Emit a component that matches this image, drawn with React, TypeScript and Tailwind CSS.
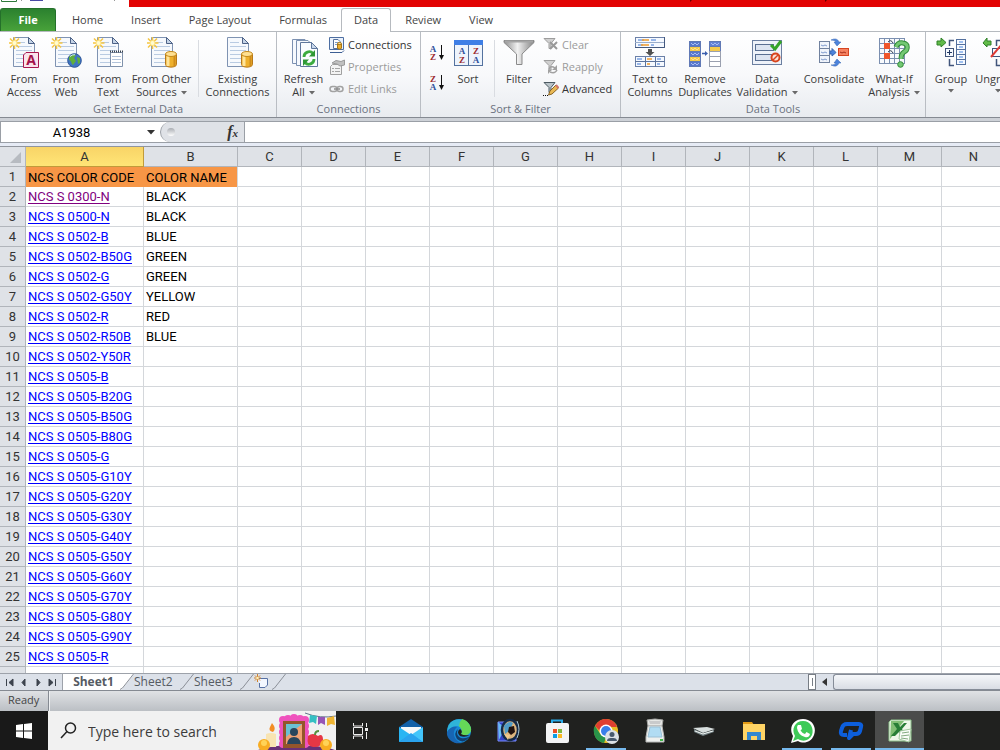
import type { ReactNode } from "react";

const uiFont = "font-['Open_Sans','Noto_Sans',sans-serif]";
const cellFont = "font-['Roboto','Lato',sans-serif]";

const tabs = ["Home", "Insert", "Page Layout", "Formulas", "Data", "Review", "View"];

const rows = [
  ["NCS S 0300-N", "BLACK"],
  ["NCS S 0500-N", "BLACK"],
  ["NCS S 0502-B", "BLUE"],
  ["NCS S 0502-B50G", "GREEN"],
  ["NCS S 0502-G", "GREEN"],
  ["NCS S 0502-G50Y", "YELLOW"],
  ["NCS S 0502-R", "RED"],
  ["NCS S 0502-R50B", "BLUE"],
  ["NCS S 0502-Y50R", ""],
  ["NCS S 0505-B", ""],
  ["NCS S 0505-B20G", ""],
  ["NCS S 0505-B50G", ""],
  ["NCS S 0505-B80G", ""],
  ["NCS S 0505-G", ""],
  ["NCS S 0505-G10Y", ""],
  ["NCS S 0505-G20Y", ""],
  ["NCS S 0505-G30Y", ""],
  ["NCS S 0505-G40Y", ""],
  ["NCS S 0505-G50Y", ""],
  ["NCS S 0505-G60Y", ""],
  ["NCS S 0505-G70Y", ""],
  ["NCS S 0505-G80Y", ""],
  ["NCS S 0505-G90Y", ""],
  ["NCS S 0505-R", ""],
];

const emptyColumns = ["C", "D", "E", "F", "G", "H", "I", "J", "K", "L", "M", "N"];

function Icon({ size = 32, children }: { size?: number; children: ReactNode }) {
  return (
    <svg width={size} height={size} viewBox={`0 0 ${size} ${size}`} className="shrink-0" aria-hidden="true">
      {children}
    </svg>
  );
}

/* ---------- Ribbon icons ---------- */

function Page() {
  return (
    <>
      <path d="M5.5 .5H20.5L26.5 6.5V29.5H5.5Z" fill="#f6f9fd" stroke="#7f93b2" />
      <path d="M20.5 .5V6.5H26.5Z" fill="#c4d3e6" stroke="#4d6287" />
      <path d="M8 9.5H24M8 13.5H24M8 17.5H24M8 21.5H24M8 25.5H24M8 5.5H17" stroke="#b9cbe2" />
    </>
  );
}

function Spark() {
  return (
    <>
      <path d="M6.5 0V12M1 6H12.5M2 1.5L11 10.5M11 1.5L2 10.5" stroke="#f5c542" strokeWidth="1.5" />
      <circle cx="6.5" cy="6" r="2.5" fill="#fffbd0" stroke="#ffe27a" />
    </>
  );
}

function Cylinder() {
  return (
    <>
      <path d="M19.5 17.5V27.5C19.5 31 30.5 31 30.5 27.5V17.5Z" fill="#eeb02c" stroke="#b8791a" />
      <path d="M22 19V29" stroke="#ffe49a" strokeWidth="3" />
      <path d="M28.5 19V29" stroke="#cf8c1c" strokeWidth="2" />
      <ellipse cx="25" cy="17" rx="5.5" ry="2.5" fill="#ffe092" stroke="#c58a1c" />
    </>
  );
}

function AccessIcon() {
  return (
    <Icon>
      <Page />
      <Spark />
      <path d="M18 15.5H30.5V30.5H15.5V18Z" fill="#fae3ec" stroke="#a8174f" />
      <text x="23" y="28" textAnchor="middle" fontSize="14" fontWeight="700" fill="#a3134b" fontFamily="Open Sans">A</text>
    </Icon>
  );
}

function WebIcon() {
  return (
    <Icon>
      <Page />
      <Spark />
      <circle cx="24.5" cy="23.5" r="6.8" fill="#3f74c4" stroke="#2c5597" />
      <path d="M19 20C21 17 24 17 26 18L24 21L26 24L23 28C21 27 22 24 19 23ZM27 20L30 21L30 26L28 27Z" fill="#5faf3c" />
      <path d="M20 19.5Q22 17.5 25 17.7" stroke="#cfe6ff" fill="none" />
    </Icon>
  );
}

function TextIcon() {
  return (
    <Icon>
      <Page />
      <Spark />
      <path d="M18.5 15.5H30.5V29.5H18.5Z" fill="#fff" stroke="#7f91ab" />
      <path d="M20 19.5H29M20 22.5H29M20 25.5H29" stroke="#b2c3da" />
      <path d="M18 14.5H31" stroke="#39414d" strokeWidth="2" strokeDasharray="1 1" />
    </Icon>
  );
}

function SourcesIcon({ spark = true }: { spark?: boolean }) {
  return (
    <Icon>
      <Page />
      {spark && <Spark />}
      <Cylinder />
    </Icon>
  );
}

function RefreshIcon() {
  return (
    <Icon>
      <path d="M4.5 2.5H17L20.5 6V26.5H4.5Z" fill="#f6f9fd" stroke="#7c91b1" />
      <path d="M8.5 3.5H20L24 7.5V28.5H8.5Z" fill="#f6f9fd" stroke="#7c91b1" />
      <path d="M12.5 5.5H23.5L29.5 11.5V29.5H12.5Z" fill="#fafcff" stroke="#5f779c" />
      <path d="M23.5 5.5V11.5H29.5Z" fill="#c9d8ec" stroke="#5f779c" />
      <path d="M16 20C16 15 22 13 25 16.5M26 22C26 27 20 29 17 25.5" fill="none" stroke="#3cab3f" strokeWidth="2.8" />
      <path d="M27 13V19.5H21ZM15 29V22.5H21Z" fill="#2f9735" />
    </Icon>
  );
}

function ConnectionsIcon() {
  return (
    <Icon size={16}>
      <path d="M.5 .5H14.5V12.5H.5Z" fill="#eaf1fb" stroke="#4d6ea2" />
      <path d="M4.5 2.5H9L11 4.5V11.5H4.5Z" fill="#fff" stroke="#56719c" />
      <path d="M6 5.5H9M6 7.5H8" stroke="#7e9bc4" />
      <path d="M8.5 7V11C8.5 12.5 12.5 12.5 12.5 11V7Z" fill="#eeb02c" stroke="#a77516" />
      <ellipse cx="10.5" cy="6.5" rx="2" ry="1" fill="#ffe092" stroke="#a77516" />
      <path d="M1 15.5H13L15 13.5" fill="none" stroke="#3c5f94" />
    </Icon>
  );
}

function PropertiesIcon() {
  return (
    <Icon size={16}>
      <path d="M3.5 5.5H12.5V15.5H1.5V7.5Z" fill="#f3f3f3" stroke="#a0a0a0" />
      <path d="M3 9.5H5M6 9.5H11M3 12.5H5M6 12.5H11" stroke="#a5a5a5" />
      <path d="M3 4L7 1.5L12 2.5L15.5 1V6L11 7L8 5Z" fill="#c0c0c0" stroke="#9a9a9a" />
    </Icon>
  );
}

function LinksIcon() {
  return (
    <Icon size={16}>
      <rect x="1" y="5.5" width="7" height="5" rx="2.5" fill="none" stroke="#a2a2a2" strokeWidth="1.5" />
      <rect x="8" y="5.5" width="6" height="5" rx="2.5" fill="none" stroke="#a2a2a2" strokeWidth="1.5" />
      <path d="M5 8H11" stroke="#8d8d8d" strokeWidth="1.5" />
    </Icon>
  );
}

function Letter({ x, y, char }: { x: number; y: number; char: "A" | "Z" }) {
  return (
    <text
      x={x}
      y={y}
      textAnchor="middle"
      fontSize="9"
      fontWeight="700"
      fontFamily="Liberation Serif"
      fill={char === "A" ? "#2f4f9b" : "#9c2a2e"}
    >
      {char}
    </text>
  );
}

function SortSmallIcon({ reverse = false }: { reverse?: boolean }) {
  return (
    <Icon size={18}>
      <Letter x={5} y={8} char={reverse ? "Z" : "A"} />
      <Letter x={5} y={16} char={reverse ? "A" : "Z"} />
      <path d="M13.5 1V14" stroke="#111" />
      <path d="M11 11H16L13.5 16Z" fill="#111" />
    </Icon>
  );
}

function SortIcon() {
  return (
    <Icon>
      <rect x="2.5" y="3.5" width="28" height="25" fill="#eef4fc" stroke="#54729f" />
      <rect x="2" y="3" width="29" height="5" fill="#3f7fe6" />
      <path d="M16.5 8V28" stroke="#54729f" />
      <Letter x={10} y={17} char="A" />
      <Letter x={10} y={26} char="Z" />
      <Letter x={24} y={17} char="Z" />
      <Letter x={24} y={26} char="A" />
    </Icon>
  );
}

function FilterIcon() {
  return (
    <Icon>
      <defs>
        <linearGradient id="funnel">
          <stop offset="0" stopColor="#8d8d8d" />
          <stop offset=".45" stopColor="#f1f1f1" />
          <stop offset="1" stopColor="#858585" />
        </linearGradient>
      </defs>
      <path d="M1 3.5H31V5.5L19 17V27.5H13.5V17L1 5.5Z" fill="url(#funnel)" stroke="#8a8a8a" />
      <path d="M2 4.5H30" stroke="#a5a5a5" strokeWidth="2" />
    </Icon>
  );
}

function SmallFunnel({ kind }: { kind: "clear" | "reapply" | "advanced" }) {
  const color = kind === "advanced" ? "#4c5a62" : "#9d9d9d";
  return (
    <Icon size={16}>
      <path d="M1 1.5H12L8 6.5V11.5H6V6.5Z" fill={kind === "advanced" ? "#bac4c9" : "#d0d0d0"} stroke={color} />
      {kind === "clear" && <path d="M7 5L14 12M14 5L7 12" stroke="#999" strokeWidth="2" />}
      {kind === "reapply" && (
        <>
          <path d="M6 10Q8 6 12 9M14 11Q12 15 7 13" fill="none" stroke="#a1a1a1" strokeWidth="1.5" />
          <path d="M14 6V11H9ZM5 15V10.5H9Z" fill="#a1a1a1" />
        </>
      )}
      {kind === "advanced" && (
        <>
          <path d="M5.5 14L7 10L13 4L15.5 7L9 13Z" fill="#e9b955" stroke="#8b6524" />
          <path d="M13 4L15.5 7" stroke="#d0756a" strokeWidth="2" />
          <path d="M0 14.5H6" stroke="#111" strokeDasharray="1 1" />
        </>
      )}
    </Icon>
  );
}

function TextColumnsIcon() {
  return (
    <Icon>
      <rect x="1.5" y=".5" width="29" height="10" fill="#f5f9ff" stroke="#6b80a8" />
      <path d="M1 5.5H31" stroke="#9aadca" />
      <path d="M1 10.5H30.5V0" fill="none" stroke="#44597f" />
      <path d="M4 3H10M17 3H22M4 8H9M17 8H20" stroke="#3b74d4" />
      <path d="M8 3H15M7 8H15" stroke="#ef9a2d" strokeWidth="1.5" />
      <path d="M14 12H18V15H20.5L16 19L11.5 15H14Z" fill="#505050" />
      <rect x="1.5" y="19.5" width="29" height="10" fill="#f5f9ff" stroke="#6b80a8" />
      <path d="M1 24.5H31M11.5 20V30M21.5 20V30" stroke="#5c739c" />
      <path d="M3 22H8M23 22H27M3 27H7M23 27H26" stroke="#3b74d4" />
      <path d="M13 22H18M13 27H16" stroke="#ef9a2d" strokeWidth="1.5" />
    </Icon>
  );
}

function DuplicatesIcon() {
  return (
    <Icon>
      {[0, 1, 2, 3, 4].map((i) => (
        <g key={i}>
          <rect x=".5" y={4.5 + i * 5} width="11" height="5" fill={i % 2 ? "#f5ca4c" : "#5877cc"} stroke="#6079b5" />
          <rect
            x="20.5"
            y={4.5 + i * 5}
            width="11"
            height="5"
            fill={i === 0 ? "#6382d6" : i === 1 ? "#f5ca4c" : "#fff"}
            stroke={i > 1 ? "#9aa0af" : "#6079b5"}
          />
          <path
            d={`M2 ${6 + i * 5}L4 ${8 + i * 5}L6 ${6 + i * 5}L8 ${8 + i * 5}L10 ${6 + i * 5}`}
            fill="none"
            stroke={i % 2 ? "#ffe08a" : "#a9bdf0"}
          />
        </g>
      ))}
      <path d="M22 6L24 8L26 6L28 8L30 6" fill="none" stroke="#a9bdf0" />
      <path d="M13 16.5H17" stroke="#3a5fae" strokeWidth="1.5" />
      <path d="M16 14L19 16.5L16 19Z" fill="#3a5fae" />
    </Icon>
  );
}

function ValidationIcon() {
  return (
    <Icon>
      <rect x="1.5" y="3.5" width="29" height="24" fill="#eef2f9" stroke="#6b7fa0" />
      <rect x="4.5" y="7.5" width="18" height="6" fill="#dce4f1" stroke="#596f92" />
      <rect x="4.5" y="17.5" width="18" height="6" fill="#dce4f1" stroke="#596f92" />
      <path d="M20 8L24 12L30 4" fill="none" stroke="#35a528" strokeWidth="3" />
      <circle cx="24.5" cy="20.5" r="4" fill="#fbe1d6" stroke="#d8441c" strokeWidth="2" />
      <path d="M22 23L27 18" stroke="#d8441c" strokeWidth="1.5" />
    </Icon>
  );
}

function ConsolidateIcon() {
  return (
    <Icon>
      <rect x="1.5" y="4.5" width="10" height="21" fill="#f0f4fb" stroke="#71829f" />
      <path d="M1 11.5H12M1 18.5H12" stroke="#71829f" />
      <path d="M3 8L5 9L7 8L9 9M3 15L5 16L7 15L9 16M3 22L5 23L7 22L9 23" fill="none" stroke="#7d9ace" />
      <rect x="20.5" y="11.5" width="10" height="7" fill="#f58262" stroke="#d64521" />
      <path d="M22 15L24 16L26 15L28 16" fill="none" stroke="#a62f1b" />
      <path d="M12 14H14V11.5L18 15.5L14 19V17H12Z" fill="#4c83dc" stroke="#3966b1" />
      <path
        d="M13 3Q19 0 21 5H23L19 9L16 5H18Q17 3 13 3ZM13 28Q19 31 21 26H23L19 22L16 26H18Q17 28 13 28Z"
        fill="#4c83dc"
        stroke="#3966b1"
        strokeWidth=".5"
      />
    </Icon>
  );
}

function WhatIfIcon() {
  return (
    <Icon>
      <rect x="1.5" y="1.5" width="25" height="25" fill="#f8fafd" />
      <path
        d="M1.5 1V27M6.5 1V27M11.5 1V27M16.5 1V27M21.5 1V27M26.5 1V27M1 1.5H27M1 6.5H27M1 11.5H27M1 16.5H27M1 21.5H27M1 26.5H27"
        stroke="#7b8fb0"
      />
      <rect x="6" y="6" width="6" height="6" fill="#ee552b" />
      <rect x="6" y="16" width="6" height="6" fill="#ee552b" />
      <path d="M10 5Q13 2 15 6M10 15Q13 12 15 16" fill="none" stroke="#303c52" />
      <path d="M18 10Q20 5 25 6C31 7 30 13 26 15C23 17 23 19 23 22" fill="none" stroke="#318c38" strokeWidth="5" />
      <path d="M18 10Q20 5 25 6C31 7 30 13 26 15C23 17 23 19 23 22" fill="none" stroke="#74c873" strokeWidth="3" />
      <circle cx="22.5" cy="27.5" r="2.8" fill="#74c873" stroke="#318c38" />
    </Icon>
  );
}

function GroupIcon({ ungroup = false }: { ungroup?: boolean }) {
  return (
    <Icon>
      <path d={ungroup ? "M9 4V8H5V10L1 6L5 1V4Z" : "M2 4H6V1L11 5.5L6 10V8H2Z"} fill="#62bb49" stroke="#2f8128" />
      <path d="M19 3.5H14.5V9M14.5 22V28.5H19" fill="none" stroke="#41557b" strokeWidth="1.5" />
      <rect x="10.5" y="11.5" width="8" height="8" fill="#f7faff" stroke="#41557b" />
      {ungroup ? (
        <path d="M9 20L21 6" stroke="#e03a35" strokeWidth="2" />
      ) : (
        <path d="M12 15.5H17M14.5 13V18" stroke="#223862" />
      )}
      <rect x="21.5" y="2.5" width="9" height="25" fill="#f7faff" stroke="#54709d" />
      <path d="M21 7.5H31M21 12.5H31M21 17.5H31M21 22.5H31" stroke="#54709d" />
      <path d="M24 5H28M24 10H28M24 15H28M24 20H28M24 25H28" stroke="#4a87df" />
    </Icon>
  );
}

/* ---------- Ribbon building blocks ---------- */

function Caret() {
  return (
    <svg width="6" height="4" viewBox="0 0 6 4" className="ml-1 inline-block align-middle" aria-hidden="true">
      <path d="M0 0H6L3 3.5Z" fill="#6a6a6a" />
    </svg>
  );
}

interface BigButtonProps {
  icon: ReactNode;
  lines: string[];
  caret?: boolean;
  className: string;
}

function BigButton({ icon, lines, caret, className }: BigButtonProps) {
  return (
    <button type="button" className={`flex shrink-0 flex-col items-center whitespace-nowrap pt-[5px] ${className}`}>
      {icon}
      <span className="mt-[3px] text-center leading-[13px] text-[#3b3b3b]">
        {lines.map((line, i) => (
          <span key={line} className="block">
            {line}
            {caret && lines.length > 1 && i === lines.length - 1 && <Caret />}
          </span>
        ))}
      </span>
      {caret && lines.length === 1 && (
        <span className="-ml-1 leading-[10px]">
          <Caret />
        </span>
      )}
    </button>
  );
}

function SmallButton({ icon, label, disabled }: { icon: ReactNode; label: string; disabled?: boolean }) {
  return (
    <button
      type="button"
      disabled={disabled}
      className="flex h-[22px] items-center gap-[3px] whitespace-nowrap text-[#333] disabled:text-[#9b9b9b]"
    >
      {icon}
      {label}
    </button>
  );
}

function RibbonGroup({ title, className, children }: { title: string; className: string; children: ReactNode }) {
  return (
    <section className={`flex shrink-0 flex-col border-r border-[#b9bdc3] ${className}`}>
      <div className="flex flex-1">{children}</div>
      <div className="h-4 text-center leading-4 text-[#6b7280]">{title}</div>
    </section>
  );
}

function Separator() {
  return <div className="mb-1 mt-2 w-px shrink-0 bg-[#d9dce1]" />;
}

function Ribbon() {
  return (
    <div className="flex h-[86px] shrink-0 overflow-hidden border-b border-[#858a92] bg-linear-to-b from-white via-[#f8f9fb] to-[#e9ecf0] text-[11px]">
      <RibbonGroup title="Get External Data" className="w-[277px]">
        <BigButton className="ml-[3px] w-[42px]" icon={<AccessIcon />} lines={["From", "Access"]} />
        <BigButton className="w-[42px]" icon={<WebIcon />} lines={["From", "Web"]} />
        <BigButton className="w-[42px]" icon={<TextIcon />} lines={["From", "Text"]} />
        <BigButton className="w-[65px]" icon={<SourcesIcon />} lines={["From Other", "Sources"]} caret />
        <div className="w-1" />
        <Separator />
        <BigButton className="w-[77px]" icon={<SourcesIcon spark={false} />} lines={["Existing", "Connections"]} />
      </RibbonGroup>
      <RibbonGroup title="Connections" className="w-36">
        <BigButton className="ml-1 w-[45px]" icon={<RefreshIcon />} lines={["Refresh", "All"]} caret />
        <div className="ml-[3px] pt-0.5">
          <SmallButton icon={<ConnectionsIcon />} label="Connections" />
          <SmallButton icon={<PropertiesIcon />} label="Properties" disabled />
          <SmallButton icon={<LinksIcon />} label="Edit Links" disabled />
        </div>
      </RibbonGroup>
      <RibbonGroup title="Sort & Filter" className="w-[200px]">
        <div className="ml-[7px] flex w-[18px] flex-col gap-3 pt-3">
          <button type="button" aria-label="Sort A to Z">
            <SortSmallIcon />
          </button>
          <button type="button" aria-label="Sort Z to A">
            <SortSmallIcon reverse />
          </button>
        </div>
        <BigButton className="w-11" icon={<SortIcon />} lines={["Sort"]} />
        <div className="w-1" />
        <Separator />
        <BigButton className="w-12" icon={<FilterIcon />} lines={["Filter"]} />
        <div className="pt-0.5">
          <SmallButton icon={<SmallFunnel kind="clear" />} label="Clear" disabled />
          <SmallButton icon={<SmallFunnel kind="reapply" />} label="Reapply" disabled />
          <SmallButton icon={<SmallFunnel kind="advanced" />} label="Advanced" />
        </div>
      </RibbonGroup>
      <RibbonGroup title="Data Tools" className="w-[305px]">
        <BigButton className="ml-1 w-[50px]" icon={<TextColumnsIcon />} lines={["Text to", "Columns"]} />
        <BigButton className="w-[60px]" icon={<DuplicatesIcon />} lines={["Remove", "Duplicates"]} />
        <BigButton className="w-16" icon={<ValidationIcon />} lines={["Data", "Validation"]} caret />
        <BigButton className="w-[70px]" icon={<ConsolidateIcon />} lines={["Consolidate"]} />
        <BigButton className="w-[50px]" icon={<WhatIfIcon />} lines={["What-If", "Analysis"]} caret />
      </RibbonGroup>
      <RibbonGroup title="" className="w-60">
        <BigButton className="ml-[3px] w-11" icon={<GroupIcon />} lines={["Group"]} caret />
        <BigButton className="w-[50px]" icon={<GroupIcon ungroup />} lines={["Ungroup"]} caret />
      </RibbonGroup>
    </div>
  );
}

function TitleBar() {
  return (
    <div className="flex h-[7px] shrink-0 bg-white">
      <svg width="129" height="7" viewBox="0 0 129 7" className="shrink-0" aria-hidden="true">
        <path d="M1.5 0V1.5H16.5V0" fill="none" stroke="#2e7a3b" />
        <path d="M30 0H43V1H30Z" fill="#4a4aa5" />
        <path d="M21.5 0V1M114.5 0V1" stroke="#999" />
      </svg>
      <div className="flex-1 bg-[#e20303]">
        <svg width="100%" height="7" aria-hidden="true">
          <path d="M561 0H563L561 2ZM696 0H698L696 2Z" fill="#5f0000" />
        </svg>
      </div>
    </div>
  );
}

function RibbonTabs() {
  return (
    <nav className="flex h-[25px] shrink-0 items-stretch border-b border-[#b6babf] bg-white pt-px text-[11px] text-[#444]">
      <button
        type="button"
        className="mr-0.5 w-14 rounded-t-[3px] border border-b-0 border-[#24702a] bg-linear-to-b from-[#2b812f] to-[#48a23a] font-bold text-white"
      >
        File
      </button>
      {tabs.map((tab) => (
        <button
          key={tab}
          type="button"
          className={
            tab === "Data"
              ? "-mb-px rounded-t-[3px] border border-b-0 border-[#b6babf] bg-white px-3"
              : "px-3.5 pt-0.5"
          }
        >
          {tab}
        </button>
      ))}
    </nav>
  );
}

function FormulaBar() {
  return (
    <div className="shrink-0 border-b border-[#90959d] bg-[#e6ebf5] pb-[3px]">
      <div className="h-[3px] bg-[#cdd1d7]" />
      <div className={`flex h-[22px] border-y border-[#9a9fa6] bg-white ${cellFont}`}>
        <input
          aria-label="Name Box"
          defaultValue="A1938"
          className="w-[142px] border-l border-[#9a9fa6] pt-px text-center text-[13px] text-black outline-none"
        />
        <button type="button" aria-label="Name list" className="flex w-[18px] items-center justify-center">
          <svg width="8" height="5" viewBox="0 0 8 5" aria-hidden="true">
            <path d="M0 0H8L4 4.5Z" fill="#333" />
          </svg>
        </button>
        <div className="flex w-[85px] items-center justify-between rounded-l-full border-l border-r border-[#9a9fa6] bg-[#dfe2e7] px-1.5">
          <span className="h-2 w-2 rounded-full bg-linear-to-b from-[#a9adb3] to-white" />
          <button
            type="button"
            aria-label="Insert Function"
            className="font-['Liberation_Serif',serif] text-base font-bold italic leading-4 text-[#333]"
          >
            f<span className="text-[11px]">x</span>
          </button>
        </div>
        <input aria-label="Formula" className="min-w-0 flex-1 outline-none" />
      </div>
    </div>
  );
}

const headCell =
  "h-5 border-b border-r border-[#b1b5bb] bg-[#dfe2e7] px-0 pb-0 pt-px text-center font-normal leading-[18px] text-[#333]";
const gridCell =
  "h-5 overflow-hidden whitespace-nowrap border-b border-r border-[#d4d7db] px-0.5 pb-0 pt-px leading-[18px]";

function Sheet() {
  return (
    <main className={`min-h-0 flex-1 overflow-hidden bg-white text-[13px] text-black ${cellFont}`}>
      <table className="w-[1006px] min-w-full table-fixed border-separate border-spacing-0">
        <colgroup>
          <col className="w-[26px]" />
          <col className="w-[118px]" />
          <col className="w-[94px]" />
          {emptyColumns.map((c) => (
            <col key={c} className="w-16" />
          ))}
        </colgroup>
        <thead>
          <tr>
            <th className={headCell} aria-label="Select all">
              <svg width="25" height="18" viewBox="0 0 25 18" className="block" aria-hidden="true">
                <path d="M21 4V15H10Z" fill="#b7bbc1" />
              </svg>
            </th>
            <th className="h-5 border-b border-r border-[#c19b3a] bg-linear-to-b from-[#f8d467] to-[#ffe576] px-0 pb-0 pt-px text-center font-normal leading-[18px] text-[#333]">
              A
            </th>
            {["B", ...emptyColumns].map((c) => (
              <th key={c} className={headCell}>
                {c}
              </th>
            ))}
          </tr>
        </thead>
        <tbody>
          <tr>
            <th className={headCell}>1</th>
            <td className="h-5 whitespace-nowrap bg-[#f79646] px-0.5 pb-0 pt-px leading-[18px]">NCS COLOR CODE</td>
            <td className="h-5 whitespace-nowrap border-r border-[#d4d7db] bg-[#f79646] px-0.5 pb-0 pt-px leading-[18px]">
              COLOR NAME
            </td>
            {emptyColumns.map((c) => (
              <td key={c} className={gridCell} />
            ))}
          </tr>
          {rows.map(([code, name], i) => (
            <tr key={code}>
              <th className={headCell}>{i + 2}</th>
              <td className={gridCell}>
                <a
                  href="#"
                  className={
                    i === 0
                      ? "text-[#800080] underline underline-offset-2"
                      : "text-[#0000ff] underline underline-offset-2"
                  }
                >
                  {code}
                </a>
              </td>
              <td className={gridCell}>{name}</td>
              {emptyColumns.map((c) => (
                <td key={c} className={gridCell} />
              ))}
            </tr>
          ))}
          <tr>
            <th className={headCell} />
            <td className={gridCell} />
            <td className={gridCell} />
            {emptyColumns.map((c) => (
              <td key={c} className={gridCell} />
            ))}
          </tr>
        </tbody>
      </table>
    </main>
  );
}

function Slant({ active = false }: { active?: boolean }) {
  return (
    <svg width="14" height="16" viewBox="0 0 14 16" className="shrink-0" aria-hidden="true">
      {active && <path d="M0 0H14L3 14L1 16H0Z" fill="#fff" />}
      <path d="M13.5 0L2.5 14L0 15.5" fill="none" stroke="#8b9098" />
    </svg>
  );
}

const navShapes = [
  { label: "First sheet", d: "M1.5 1V8M8 1L4 4.5L8 8Z" },
  { label: "Previous sheet", d: "M6 1L3 4.5L6 8Z" },
  { label: "Next sheet", d: "M3 1L6 4.5L3 8Z" },
  { label: "Last sheet", d: "M7.5 1V8M1 1L5 4.5L1 8Z" },
];

function SheetTabs() {
  return (
    <div className="flex h-[17px] shrink-0 border-t border-[#9da2aa] bg-[#dce1e9] text-xs text-[#555b63]">
      <div className="flex w-[63px] items-center justify-between border-r border-[#9da2aa] px-[5px]">
        {navShapes.map((nav) => (
          <button key={nav.label} type="button" aria-label={nav.label}>
            <svg width="9" height="9" viewBox="0 0 9 9" aria-hidden="true">
              <path d={nav.d} fill="#3c434d" stroke="#3c434d" />
            </svg>
          </button>
        ))}
      </div>
      <button type="button" className="w-[57px] bg-white pl-1 text-center font-bold leading-4">
        Sheet1
      </button>
      <Slant active />
      <button type="button" className="w-[46px] text-left leading-4">
        Sheet2
      </button>
      <Slant />
      <button type="button" className="w-[46px] text-left leading-4">
        Sheet3
      </button>
      <Slant />
      <button type="button" aria-label="Insert Worksheet" className="w-[18px]">
        <svg width="18" height="16" viewBox="0 0 18 16" aria-hidden="true">
          <path d="M3.5 4.5H13.5V11L11 13.5H5.5V9" fill="#f3f7ff" stroke="#5872a5" />
          <path d="M3.5 0V8M0 4H7M1 1.5L6 6.5M6 1.5L1 6.5" stroke="#d1812b" />
          <circle cx="3.5" cy="4" r="1.3" fill="#fff1b5" />
        </svg>
      </button>
      <Slant />
      <div className="flex-1" />
      <div className="flex w-48 shrink-0">
        <div className="flex w-2 items-center justify-center border border-[#777d85] bg-white">
          <span className="h-2 w-px bg-[#777d85]" />
        </div>
        <button type="button" aria-label="Scroll left" className="flex w-[17px] items-center justify-center">
          <svg width="5" height="8" viewBox="0 0 5 8" aria-hidden="true">
            <path d="M5 0V8L0 4Z" fill="#333" />
          </svg>
        </button>
        <div className="flex-1 rounded-l-[3px] border border-r-0 border-[#858c98] bg-linear-to-b from-[#f5f7fa] to-[#d9dde5]" />
      </div>
    </div>
  );
}

function StatusBar() {
  return (
    <div className="flex h-[21px] shrink-0 items-stretch border-t border-[#858a92] bg-linear-to-b from-[#e0e2e5] to-[#bbbfc4] text-[11px] text-[#444]">
      <span className="w-12 pl-2 leading-[18px]">Ready</span>
      <span className="w-px bg-[#858a92]" />
      <span className="w-px bg-[#eef0f2]" />
    </div>
  );
}

/* ---------- Taskbar ---------- */

function AltarArt() {
  return (
    <svg width="80" height="38" viewBox="0 0 80 38" className="shrink-0" aria-hidden="true">
      <path d="M2 38Q20 32 42 34Q65 33 79 38Z" fill="#683177" />
      <path d="M49 1Q64 7 80 4" stroke="#63758a" fill="none" />
      <path d="M54 3L61 4L60 12L57 10L53 11Z" fill="#35bfc3" />
      <path d="M62 5L69 5L69 13L65 11L62 13Z" fill="#9655b6" />
      <path d="M71 6L78 4L79 13L75 12L71 14Z" fill="#efb533" />
      <g fill="#ef52bd">
        {[8, 14, 20, 26, 32].map((y) => (
          <g key={y}>
            <circle cx="27" cy={y} r="4" />
            <circle cx="49" cy={y} r="4" />
          </g>
        ))}
        <circle cx="32" cy="7" r="4" />
        <circle cx="38" cy="6" r="4" />
        <circle cx="44" cy="7" r="4" />
      </g>
      <rect x="27" y="9" width="22" height="27" fill="#94552b" />
      <rect x="30" y="12" width="16" height="20" fill="#f0a274" />
      <path d="M30 12H46L30 25Z" fill="#6bc1d3" />
      <circle cx="38" cy="20" r="4" fill="#29455c" />
      <path d="M31 32Q32 25 38 25Q44 25 45 32Z" fill="#29455c" />
      <path d="M10 22Q15 20 20 22V35H10Z" fill="#f8e4b2" />
      <path d="M16 11Q21 17 17 20Q12 19 14 15Z" fill="#f28d23" />
      <circle cx="8" cy="33" r="6" fill="#f8ad22" />
      <circle cx="8" cy="31" r="3" fill="#ffd357" />
      <path d="M52 24Q57 20 62 24Q67 21 67 28Q66 36 57 35Q50 35 52 24Z" fill="#e53745" />
      <path d="M59 23Q59 19 63 19" fill="none" stroke="#57913e" strokeWidth="2" />
      <circle cx="70" cy="33" r="6" fill="#f8ad22" />
      <circle cx="70" cy="31" r="3" fill="#ffd357" />
    </svg>
  );
}

function TaskIcon({ children }: { children: ReactNode }) {
  return (
    <svg width="26" height="26" viewBox="0 0 26 26" aria-hidden="true">
      {children}
    </svg>
  );
}

const taskItems = [
  {
    label: "Task View",
    icon: (
      <TaskIcon>
        <path
          d="M5.5 5V8H14.5V5M5.5 21V18H14.5V21M5.5 9.5H14.5V16.5H5.5ZM18.5 5V9M18.5 14V21"
          fill="none"
          stroke="#eee"
        />
        <rect x="17" y="10" width="3" height="3" fill="#eee" />
      </TaskIcon>
    ),
  },
  {
    label: "Mail",
    icon: (
      <TaskIcon>
        <path d="M2 9L14 1L26 9V24H2Z" fill="#1260a8" />
        <path d="M4 9H24V15L14 21L4 15Z" fill="#f6f8fa" />
        <path d="M2 9L14 17L2 24Z" fill="#29b5f3" />
        <path d="M26 9L14 17L26 24Z" fill="#43c5fa" />
        <path d="M2 24L14 15L26 24Z" fill="#2aa3ee" />
      </TaskIcon>
    ),
  },
  {
    label: "Edge",
    icon: (
      <TaskIcon>
        <circle cx="13" cy="13" r="12" fill="#1789d7" />
        <path d="M2 9C5-1 21-2 25 10C26 16 20 19 15 16C18 13 16 9 11 8C6 8 3 11 1 15Z" fill="#2fb4d8" />
        <path d="M16 1C22 2 26 9 25 13C23 18 17 18 15 16Q17 12 13 8Q13 4 16 1Z" fill="#65d858" />
        <path d="M11 9C5 14 8 23 16 25C7 27 0 20 1 14C3 10 7 8 11 9Z" fill="#1765b3" />
        <path d="M12 11Q9 17 15 20Q20 21 24 18Q18 27 11 21Q7 15 12 11Z" fill="#123f6e" />
        <path d="M14 11Q10 14 14 18Q19 20 24 17Q18 18 15 16Q17 13 14 11Z" fill="#20211f" />
      </TaskIcon>
    ),
  },
  {
    label: "Image Viewer",
    icon: (
      <TaskIcon>
        <path d="M3 4H21V23H3Z" fill="#3542c7" stroke="#7b8fff" />
        <path d="M3 4L10 10L4 22Z" fill="#69baf5" />
        <ellipse cx="15" cy="12" rx="8" ry="10" fill="#dcb57f" stroke="#142a48" strokeWidth="2.5" />
        <path d="M9 8Q14 2 18 5L15 12L10 16Z" fill="#4f9cc8" />
        <path d="M14 9L19 8L20 14L16 17L13 14Z" fill="#22130f" />
        <path d="M9 16L15 17L13 22Z" fill="#f1c98d" />
        <path d="M22 3Q26 11 22 20" fill="none" stroke="#a9c9d9" />
      </TaskIcon>
    ),
  },
  {
    label: "Microsoft Store",
    icon: (
      <TaskIcon>
        <path d="M8 7V2.5H18V7" fill="none" stroke="#29aae8" strokeWidth="2" />
        <rect x="2" y="5" width="23" height="20" rx="2" fill="#f3f4f5" />
        <path d="M9 11H13V15H9Z" fill="#ee5025" />
        <path d="M14 11H18V15H14Z" fill="#80b83d" />
        <path d="M9 16H13V20H9Z" fill="#0b9de4" />
        <path d="M14 16H18V20H14Z" fill="#fbb921" />
      </TaskIcon>
    ),
  },
  {
    label: "Chrome",
    open: true,
    icon: (
      <TaskIcon>
        <circle cx="13" cy="13" r="12" fill="#e8bd24" />
        <path d="M2 8Q7 0 13 1Q21 1 24 9H12L8 14Z" fill="#df3f31" />
        <path d="M2 8L8 17H14L11 25Q2 23 1 15Q0 10 2 8Z" fill="#29944a" />
        <circle cx="13" cy="13" r="6.5" fill="#fff" />
        <circle cx="13" cy="13" r="5" fill="#397fe9" />
        <circle cx="19" cy="19" r="7" fill="#dce1e6" />
        <circle cx="19" cy="16.5" r="2.5" fill="#48596d" />
        <path d="M14 23Q14 19.5 19 20Q24 19.5 24 23Z" fill="#48596d" />
      </TaskIcon>
    ),
  },
  {
    label: "Scanner",
    icon: (
      <TaskIcon>
        <path d="M5 2Q13 0 21 2L20 8H6Z" fill="#e6e7e5" stroke="#a7a8a5" />
        <path d="M7 3H19L18 6H8Z" fill="#c9cacb" />
        <path d="M6 8H20L22 19V24H4V19Z" fill="#eef0ee" stroke="#b7b9b8" />
        <path d="M8 9H18L20 19H6Z" fill="#b1dcf3" stroke="#9cc0d5" />
        <path d="M18 22H21" stroke="#42b84a" strokeWidth="2" />
      </TaskIcon>
    ),
  },
  {
    label: "Flatbed",
    icon: (
      <TaskIcon>
        <path d="M2 10L16 9L24 11L12 15Z" fill="#d8dfde" />
        <path d="M3 11L12 15L23 12V14L12 18L3 14Z" fill="#738184" />
        <path d="M4 13L12 16L22 13" stroke="#f3f8f5" fill="none" />
      </TaskIcon>
    ),
  },
  {
    label: "File Explorer",
    icon: (
      <TaskIcon>
        <path d="M3 4H12L14 7H3Z" fill="#e19a16" />
        <path d="M3 6H25V22H3Z" fill="#ffd465" />
        <path d="M7 22V14H21V22H17V18H11V22Z" fill="#3387cf" />
      </TaskIcon>
    ),
  },
  {
    label: "WhatsApp",
    open: true,
    icon: (
      <TaskIcon>
        <path d="M2 25L4 18C-1 9 5 1 14 1C23 1 28 9 25 17C22 25 14 26 9 23Z" fill="#fff" />
        <path d="M4 23L6 18C2 11 6 3 14 3C22 3 25 11 23 17C20 23 14 24 9 21Z" fill="#3eca58" />
        <path
          d="M9 7L12 7L13 11L11.5 12.5Q13 15 16 16L17.5 14L21 16Q20 20 16 19Q9 17 8 10Q8 8 9 7Z"
          fill="#fff"
        />
      </TaskIcon>
    ),
  },
  {
    label: "QP",
    open: true,
    icon: (
      <TaskIcon>
        <path
          d="M9 17H6Q2 17 3 13L4 10Q5 6 9 6H21Q24 6 23 9L22 13Q21 16 18 16H15L11 20L13 12"
          fill="none"
          stroke="#0d5fdc"
          strokeWidth="4"
          strokeLinejoin="round"
        />
      </TaskIcon>
    ),
  },
  {
    label: "Excel",
    active: true,
    icon: (
      <TaskIcon>
        <path d="M4 2H24V23H2V4Z" fill="#eef6e9" stroke="#8fc38d" />
        <path d="M4 3H17L3 21Z" fill="#82be75" />
        <path d="M6 5H11L13 9L17 5H20L15 11L19 18H14L12 14L8 18H4L10 11Z" fill="#287d36" />
        <path d="M13 13L24 11L22 24L12 21Z" fill="#fafdf8" stroke="#a3c8a0" />
        <path d="M15 15L22 14M14 18L22 17M14 20L21 21" stroke="#83aa80" />
      </TaskIcon>
    ),
  },
];

function Taskbar() {
  return (
    <footer className="flex h-[39px] shrink-0 overflow-hidden bg-[#20211f]">
      <button type="button" aria-label="Start" className="flex w-12 shrink-0 items-center justify-center bg-[#191919]">
        <svg width="16" height="16" viewBox="0 0 16 16" aria-hidden="true">
          <path d="M0 2L7 1V7.5H0ZM8 1L16 0V7.5H8ZM0 8.5H7V15L0 14ZM8 8.5H16V16L8 15Z" fill="#fff" />
        </svg>
      </button>
      <label className="flex w-72 shrink-0 items-center bg-[#f1f1f1] pl-3">
        <svg width="17" height="17" viewBox="0 0 17 17" className="shrink-0" aria-hidden="true">
          <circle cx="10.5" cy="6" r="5" fill="none" stroke="#222" strokeWidth="1.5" />
          <path d="M7 9.5L1 16" stroke="#222" strokeWidth="1.5" />
        </svg>
        <input
          type="text"
          aria-label="Search"
          placeholder="Type here to search"
          className="ml-[11px] min-w-0 flex-1 bg-transparent pt-0.5 text-sm text-[#333] outline-none placeholder:text-[#3c3c3c]"
        />
        <AltarArt />
      </label>
      {taskItems.map((item) => (
        <button
          key={item.label}
          type="button"
          aria-label={item.label}
          className={`flex w-[49px] shrink-0 flex-col items-center ${item.active ? "bg-[#4b4c4b]" : ""}`}
        >
          <span className="flex flex-1 items-center pt-0.5">{item.icon}</span>
          <span
            className={item.active ? "h-0.5 w-full bg-[#76b9ed]" : item.open ? "h-0.5 w-10 bg-[#76b9ed]" : "h-0.5"}
          />
        </button>
      ))}
    </footer>
  );
}

export default function App() {
  return (
    <div className={`flex h-screen min-w-0 flex-col overflow-hidden bg-white ${uiFont}`}>
      <TitleBar />
      <RibbonTabs />
      <Ribbon />
      <FormulaBar />
      <Sheet />
      <SheetTabs />
      <StatusBar />
      <Taskbar />
    </div>
  );
}
